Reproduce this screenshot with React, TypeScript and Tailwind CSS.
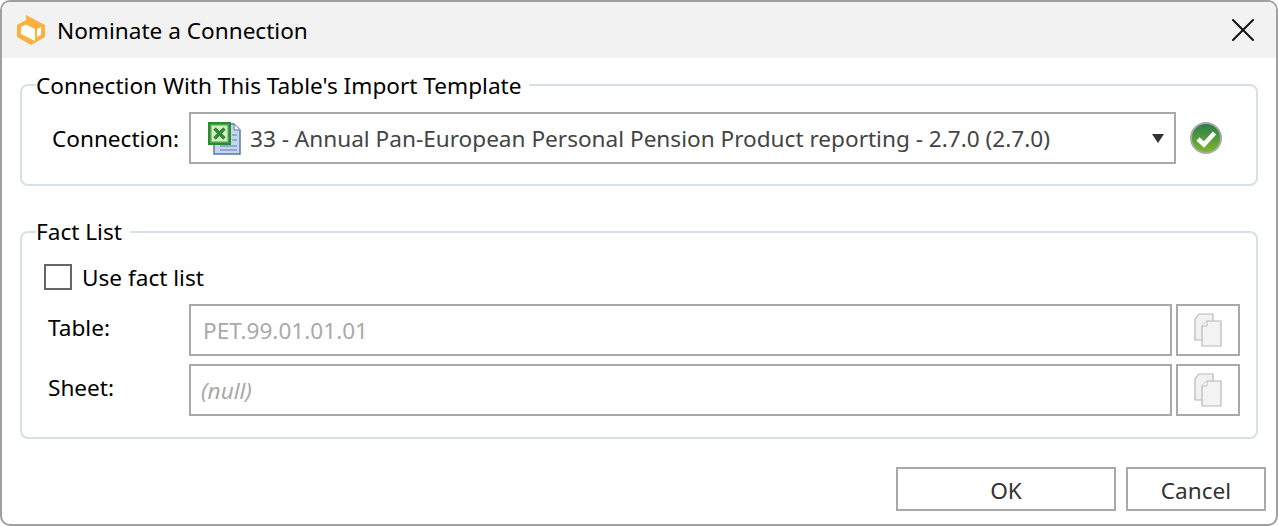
import { X } from 'lucide-react';

function AppLogo() {
  return (
    <svg width="28" height="30" viewBox="0 0 28 30" className="shrink-0">
      <path d="M0 10 L9 5 L9 0 L28 10 L28 22 L14 30 L0 22 Z" fill="#fbb040" />
      <path d="M4 12 L9 9.5 L18 14 L18 26 L4 19 Z" fill="#fff" />
      <path d="M20 14 L24 12 L24 20 L20 22 Z" fill="#fff" />
    </svg>
  );
}

function ExcelIcon() {
  return (
    <svg width="34" height="33" viewBox="0 0 34 33" className="shrink-0">
      <path d="M6 2 H26 L32 8 V32 H6 Z" fill="#c3d6ee" stroke="#5a78a6" strokeWidth="1.5" />
      <path d="M26 2 V8 H32" fill="#eef3fa" stroke="#5a78a6" strokeWidth="1" />
      <path d="M24 13 H29 M24 18 H29 M12 24 H29 M12 28 H29" stroke="#7f9cc4" strokeWidth="1.5" />
      <rect x="1" y="1" width="21" height="21" fill="#4aa544" stroke="#2c8a34" strokeWidth="2" />
      <rect x="3.5" y="3.5" width="16" height="16" fill="#d6ecc9" />
      <path d="M6.5 6.5 L16.5 16.5 M16.5 6.5 L6.5 16.5" stroke="#2e8b32" strokeWidth="3.5" />
    </svg>
  );
}

function CheckBadge() {
  return (
    <svg width="34" height="34" viewBox="0 0 34 34" className="shrink-0">
      <defs>
        <linearGradient id="badge" x1="0" y1="0" x2="0" y2="1">
          <stop offset="0" stopColor="#2a7a4c" />
          <stop offset="1" stopColor="#82b82c" />
        </linearGradient>
      </defs>
      <circle cx="17" cy="17" r="15" fill="url(#badge)" stroke="#a3aca5" strokeWidth="2" />
      <path d="M9 18 L15 23.5 L25.5 12" fill="none" stroke="#fff" strokeWidth="4.5" />
    </svg>
  );
}

function CopyIcon() {
  return (
    <svg width="30" height="34" viewBox="0 0 30 34">
      <path d="M6 1 H20 V27 H2 V6 Z" fill="#f1f1f1" stroke="#b8b8b8" strokeWidth="1.2" />
      <path d="M14 8 H28 V33 H9 V13 Z" fill="#f3f3f3" stroke="#b8b8b8" strokeWidth="1.2" />
      <path d="M14 8 V13 H9" fill="#fff" stroke="#b8b8b8" strokeWidth="1" />
    </svg>
  );
}

function FieldRow({ label, value, italic }: { label: string; value: string; italic?: boolean }) {
  return (
    <div className="flex items-center h-[52px]">
      <span className="w-[167px] pl-[26px] -mt-[4px] text-black">{label}</span>
      <div className={`flex items-center w-[983px] h-full border-2 border-[#a9a9a9] pt-[2px] text-[#a9a9a9] ${italic ? 'italic pl-[10px]' : 'pl-[12px]'}`}>
        {value}
      </div>
      <button className="flex items-center justify-center w-[64px] h-full ml-[4px] border-2 border-[#a9a9a9]">
        <CopyIcon />
      </button>
    </div>
  );
}

export default function App() {
  return (
    <div
      className="flex flex-col w-[1278px] h-[526px] overflow-hidden bg-white border-2 border-[#a0a0a0] rounded-[10px] text-[22.6px] leading-[32px] text-black"
      style={{ fontFamily: '"Noto Sans", "Open Sans", sans-serif' }}
    >
      {/* Title bar */}
      <div className="flex items-center h-[56px] shrink-0 bg-[#f2f2f2] pl-[15px] pr-[13px]">
        <AppLogo />
        <span className="ml-[12px] pt-[1px]">Nominate a Connection</span>
        <X size={40} strokeWidth={1.2} className="ml-auto text-[#111]" />
      </div>

      <div className="flex flex-col flex-1 pl-[18px] pr-[18px] pt-[11px]">
        {/* Connection group */}
        <fieldset className="w-[1238px] h-[117px] border-2 border-[#d5e0ea] rounded-[8px] pl-[14px]">
          <legend className="pr-[8px]"><span className="inline-block translate-y-px">Connection With This Table's Import Template</span></legend>
          <div className="flex items-center h-[52px] mt-[11px]">
            <span className="w-[153px] pl-[16px] pt-[1px]">Connection:</span>
            <div className="relative flex items-center w-[987px] h-full border-2 border-[#a9a9a9] pl-[17px] text-[#444]">
              <ExcelIcon />
              <span className="ml-[8px] pt-[1px]">33 - Annual Pan-European Personal Pension Product reporting - 2.7.0 (2.7.0)</span>
              <span className="absolute right-[10px] top-[20px] w-0 h-0 border-x-[6px] border-x-transparent border-t-[9px] border-t-[#333]" />
            </div>
            <div className="ml-[13px]"><CheckBadge /></div>
          </div>
        </fieldset>

        {/* Fact list group */}
        <fieldset className="w-[1238px] h-[223px] mt-[30px] border-2 border-[#d5e0ea] rounded-[8px] pl-[14px]">
          <legend className="pr-[8px]">Fact List</legend>
          <label className="flex items-center h-[30px] mt-[14px] mb-[12px] ml-[8px]">
            <span className="w-[28px] h-[26px] border-2 border-[#666] bg-white" />
            <span className="ml-[10px] pt-[2px]">Use fact list</span>
          </label>
          <div className="flex flex-col gap-[8px] -ml-[14px]">
            <FieldRow label="Table:" value="PET.99.01.01.01" />
            <FieldRow label="Sheet:" value="(null)" italic />
          </div>
        </fieldset>

        {/* Dialog buttons */}
        <div className="flex justify-end gap-[10px] mt-[28px] -mr-[8px]">
          <button className="w-[220px] h-[44px] border-2 border-[#a9a9a9] pt-[3px] text-[#333]">OK</button>
          <button className="w-[140px] h-[44px] border-2 border-[#a9a9a9] pt-[3px] text-[#333]">Cancel</button>
        </div>
      </div>
    </div>
  );
}
